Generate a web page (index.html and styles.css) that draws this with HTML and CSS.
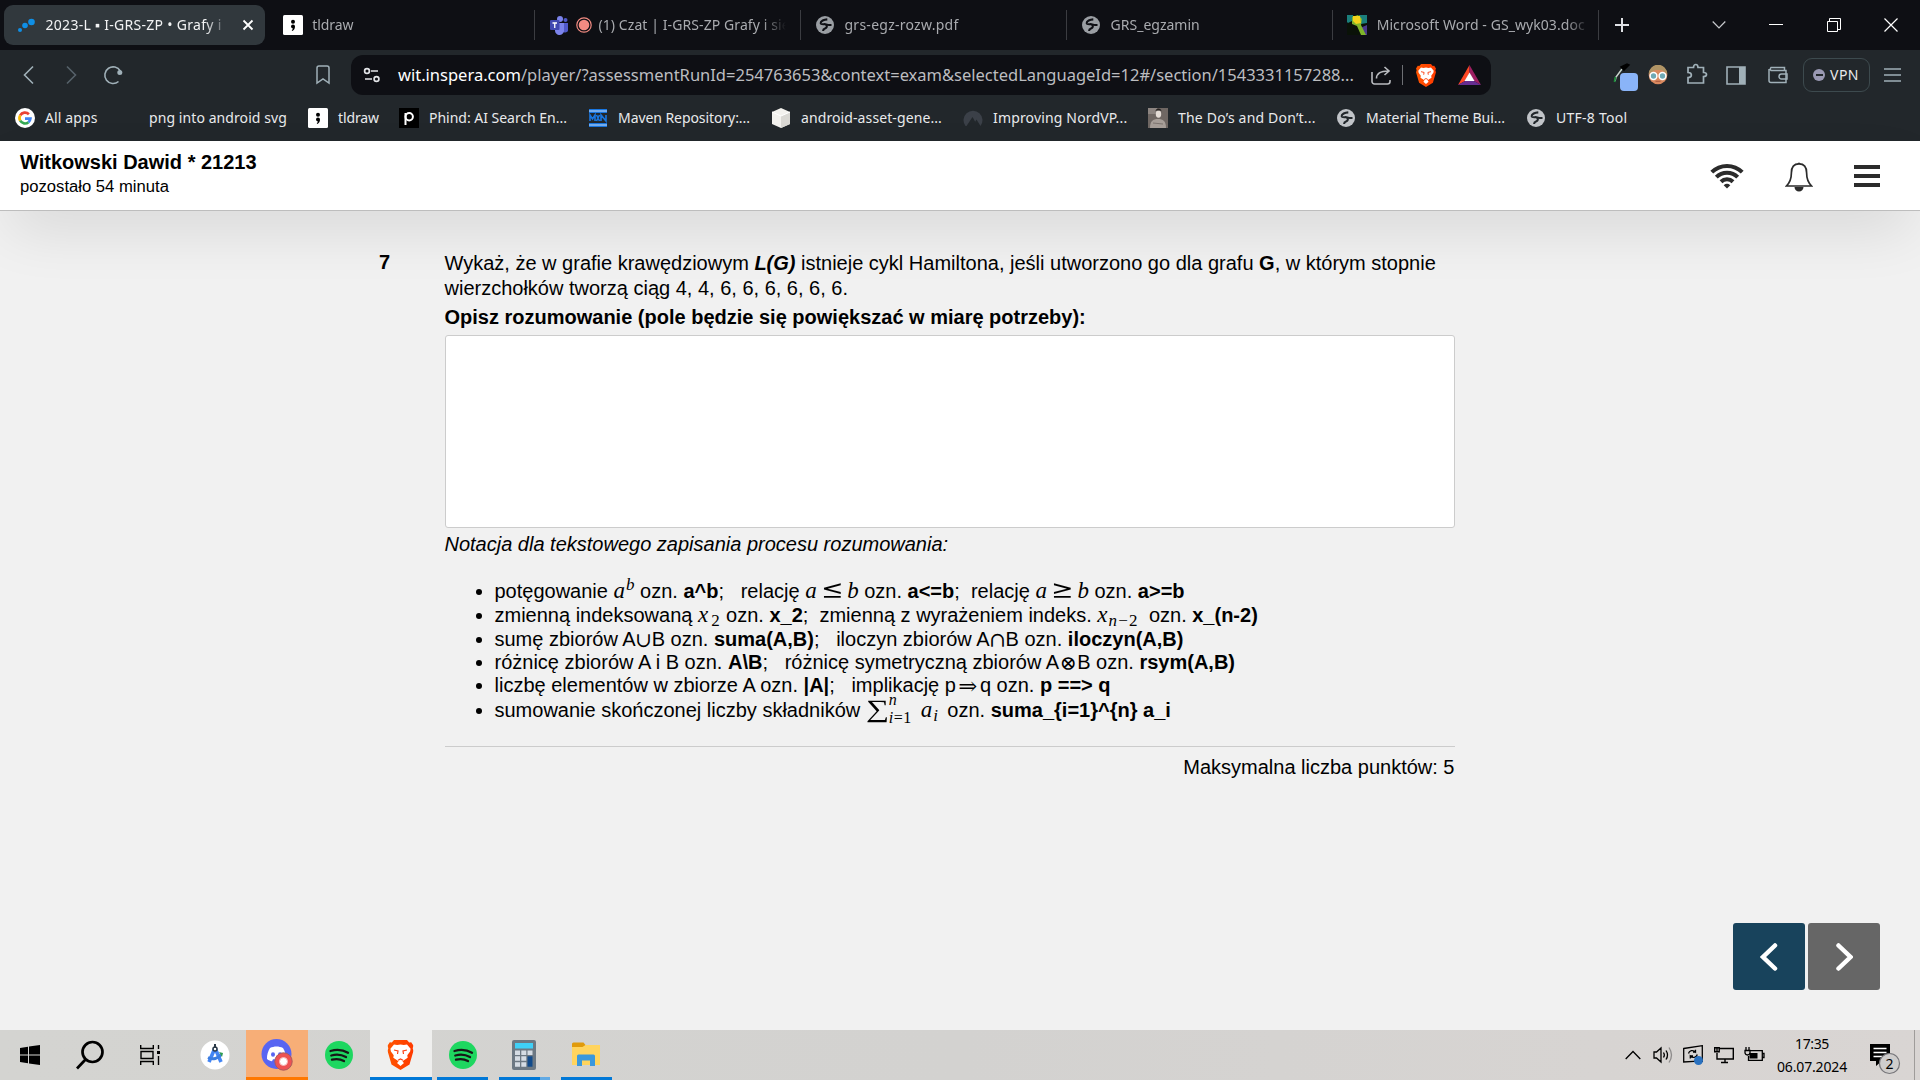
FILE: index.html
```html
<!DOCTYPE html>
<html lang="pl">
<head>
<meta charset="utf-8">
<title>2023-L ▪ I-GRS-ZP • Grafy i sieci</title>
<link rel="stylesheet" href="styles.css">
</head>
<body>
<svg class="defs" width="0" height="0">
  <symbol id="globe" viewBox="0 0 18 18"><circle cx="9" cy="9" r="9" fill="currentColor"/><path d="M11.300 3.400C8 3.600 4.500 5 4.700 7.200c.2 1.500 2.800.8 4.800 1 1.500.2 2 .8 3.300.8h2.700M9.800 8.500c1.800 1.700 1.200 3.300-.8 3.900-1.700.5-1.900 1.300-1.900 2.600" fill="none" stroke="var(--hole)" stroke-width="2.100"/></symbol>
  <symbol id="tld" viewBox="0 0 20 20"><rect width="20" height="20" rx="1.500" fill="#fff"/><circle cx="10" cy="6.700" r="2" fill="#000"/><path d="M8 11.500a2 2 0 1 1 4 0c0 2.300-1 3.700-2.700 4.500l-.6-.9c.8-.5 1.200-1.100 1.200-1.700-1.100 0-1.900-.9-1.900-1.900z" fill="#000"/></symbol>
  <symbol id="spot" viewBox="0 0 28 28"><circle cx="14" cy="14" r="14" fill="#1ed760"/><path d="M5.500 10c6-1.700 12.500-1.100 17.500 1.700M6.300 14.500c5-1.400 10.500-.8 14.700 1.600M7 18.700c4.200-1.100 8.500-.6 12 1.400" fill="none" stroke="#171717" stroke-width="2.300" stroke-linecap="round"/></symbol>
  <symbol id="lion" viewBox="0 0 26 30"><path d="M6.500 0h13l2.200 2.600 2-.4L26 5.800l-.8 2.400.8 2.600-4 13.700-9 5.500-9-5.500L0 10.800l.8-2.600L0 5.800l2.300-3.600 2 .4z" fill="url(#lg)"/><path d="M13 4.500l3.300.6 3.200-.5 3.600 4.200-.5 2.700-2.800 3.800.4 2.500-4.200 2.600-1 1.100 1.500 1.600L13 26l-3.500-2.900 1.500-1.600-1-1.100-4.200-2.600.4-2.500-2.800-3.800-.5-2.700 3.600-4.200 3.200.5z" fill="#fff"/><path d="M6.500 10l4 1-.5 3M19.500 10l-4 1 .5 3M10.500 20.300l2.500-1.400 2.500 1.400" fill="none" stroke="#fb4012" stroke-width="1.200"/></symbol>
  <linearGradient id="lg"><stop offset="0" stop-color="#ff5500"/><stop offset="1" stop-color="#ff3a00"/></linearGradient>
</svg>

<header class="browser">
  <div class="tabs">
    <div class="tab active">
      <svg class="fav" viewBox="0 0 20 20" fill="#0f8fe6"><circle cx="4" cy="15" r="2"/><circle cx="9" cy="10.500" r="2.800"/><circle cx="15.500" cy="7" r="3.300"/></svg>
      <span class="tab-title t-exam">2023-L ▪ I-GRS-ZP • Grafy i</span>
      <svg class="tab-close" viewBox="0 0 12 12"><path d="M1.500 1.500l9 9M10.500 1.500l-9 9" stroke="#fff" stroke-width="1.800"/></svg>
    </div>
    <div class="tab"><svg class="fav"><use href="#tld"/></svg><span class="tab-title">tldraw</span></div>
    <div class="tab sep">
      <svg class="fav" viewBox="0 0 20 20"><circle cx="11" cy="4" r="3" fill="#7b83eb"/><circle cx="16.500" cy="5" r="2" fill="#5059c9"/><path d="M13 8h6v6a3 3 0 0 1-6 1z" fill="#5059c9"/><path d="M6 8h9v7a4.500 4.500 0 0 1-9 1z" fill="#7b83eb"/><rect x="1" y="5" width="9.500" height="10" rx="1" fill="#4048b0"/><path d="M3.500 8h4.500M5.750 8v5" stroke="#fff" stroke-width="1.300"/></svg>
      <svg class="rec" viewBox="0 0 16 16"><circle cx="8" cy="8" r="7.200" fill="none" stroke="#f28b82" stroke-width="1.200"/><circle cx="8" cy="8" r="5.300" fill="#f28b82"/></svg>
      <span class="tab-title t-chat">(1) Czat | I-GRS-ZP Grafy i sie</span>
    </div>
    <div class="tab sep"><svg class="fav globe"><use href="#globe"/></svg><span class="tab-title t-pdf">grs-egz-rozw.pdf</span></div>
    <div class="tab sep"><svg class="fav globe"><use href="#globe"/></svg><span class="tab-title t-egz">GRS_egzamin</span></div>
    <div class="tab sep">
      <svg class="fav" viewBox="0 0 20 20"><rect width="20" height="20" fill="#0a1208"/><path d="M0 0h6l1 5-6 3-1-1zM12 0h8v8l-6 1z" fill="#1b7f7c"/><path d="M13 13l7-3v10h-5z" fill="#4b3a8c"/><path d="M5 2l6-2 4 4-1 6 5 10h-5l-4-9-5-2z" fill="#7fb52a"/><path d="M6 1l7 0 1 7-5 1-3-3z" fill="#f1d21b"/></svg>
      <span class="tab-title t-word">Microsoft Word - GS_wyk03.doc</span>
    </div>
    <div class="newtab sep"><svg width="14" height="14"><path d="M7 0v14M0 7h14" stroke="#dfe1e5" stroke-width="2"/></svg></div>
    <div class="winbtns">
      <svg width="14" height="14"><path d="M.7 3.500l6.300 6.500 6.300-6.500" fill="none" stroke="#c8cace" stroke-width="1.200"/></svg>
      <svg width="14" height="14"><path d="M0 6.500h14" stroke="#fff"/></svg>
      <svg width="14" height="14"><path d="M.5 3.500h10v10H.5zM2.500 3.500v-3h11v11h-3" fill="none" stroke="#fff"/></svg>
      <svg width="14" height="14"><path d="M.5.5l13 13M13.500.5l-13 13" stroke="#fff" stroke-width="1.200"/></svg>
    </div>
  </div>

  <div class="toolbar">
    <div class="nav">
      <svg width="20" height="20"><path d="M14 1.500L5.500 10l8.500 8.500" fill="none" stroke="#a0b0b8" stroke-width="1.600"/></svg>
      <svg width="20" height="20"><path d="M6 1.500l8.500 8.500L6 18.500" fill="none" stroke="#56616a" stroke-width="1.600"/></svg>
      <svg width="20" height="20"><path d="M15.500 16.500A8.300 8.300 0 1 1 17.300 6" fill="none" stroke="#a0b0b8" stroke-width="1.600"/><circle cx="16.800" cy="7.500" r="2.500" fill="#a0b0b8"/></svg>
    </div>
    <svg class="mark" width="14" height="20"><path d="M1 3a2 2 0 0 1 2-2h8a2 2 0 0 1 2 2v15l-6-4-6 4z" fill="none" stroke="#a0b0b8" stroke-width="1.500"/></svg>
    <div class="url">
      <svg class="tune" width="18" height="16" fill="none" stroke="#e3e5e8" stroke-width="1.700"><circle cx="4" cy="4" r="2.400"/><path d="M8 4h7M2 12h7"/><circle cx="13.500" cy="12" r="2.400"/></svg>
      <span class="address"><b>wit.inspera.com</b>/player/?assessmentRunId=254763653&amp;context=exam&amp;selectedLanguageId=12#/section/1543331157288...</span>
      <svg class="share" width="20" height="19" fill="none" stroke="#b9bbbf" stroke-width="1.600"><path d="M1 6v9.500a2.500 2.500 0 0 0 2.500 2.500h13a2.500 2.500 0 0 0 2.500-2.500V14M5.500 12.500c0-5 4-7.500 12-7.500M13.500 1l4.500 4-4.500 4"/></svg>
      <i class="bar"></i>
      <svg class="brave" width="20" height="23" viewBox="0 0 26 30"><use href="#lion"/></svg>
      <svg width="23" height="20" viewBox="0 0 23 20"><path d="M11.500 0L0 20l7-4 4.500-8z" fill="#ff4724"/><path d="M11.500 0L23 20l-7-4-4.500-8z" fill="#9e1f63"/><path d="M0 20h23l-7-4H7z" fill="#662d91"/><path d="M11.500 7.500l5 8.500h-10z" fill="#fff"/></svg>
    </div>
    <div class="exts">
      <svg class="dropper" width="26" height="30"><path d="M2 19l1-4L9 7" fill="none" stroke="#c8d4cc" stroke-width="1.500"/><path d="M1.500 20l1-5" stroke="#1f8f3e" stroke-width="1.800"/><path d="M8 5l3 3 5-5-2-1z" fill="#000" stroke="#000" stroke-width="1.500"/><rect x="7" y="11" width="18" height="18" rx="4" fill="#8ab4f8"/></svg>
      <svg class="face" width="20" height="20"><circle cx="10" cy="10" r="9.300" fill="#d9895f"/><path d="M.7 9A9.300 9.300 0 0 1 19.300 9L14 5H7z" fill="#b09465"/><circle cx="5.500" cy="11" r="3.400" fill="#6fa9b5" stroke="#fff" stroke-width="1.500"/><circle cx="14.500" cy="11" r="3.400" fill="#6fa9b5" stroke="#fff" stroke-width="1.500"/><path d="M7.500 16.300h5" stroke="#a8573c"/></svg>
      <svg class="puzzle" width="22" height="22" fill="none" stroke="#a0b0b8" stroke-width="1.700"><path d="M2 4.500h5.500c0-4 4.500-4 4.500 0h5.500v5c4 0 4 4 0 4v6.500H2v-5.500c4.500 0 4.500-5 0-5z"/></svg>
      <svg class="side" width="20" height="19"><path d="M1 1h18v17H1z" fill="none" stroke="#a0b0b8" stroke-width="1.600"/><path d="M13 1h6v17h-6z" fill="#a0b0b8"/></svg>
      <svg class="wallet" width="20" height="18" fill="none" stroke="#a0b0b8" stroke-width="1.500"><path d="M16.500 4V1.500H3a2 2 0 0 0 0 3h15v12H3a2 2 0 0 1-2-2V3"/><path d="M19 8h-5.500a2.500 2.500 0 0 0 0 5H19z"/></svg>
      <span class="vpn"><i></i>VPN</span>
      <svg class="burger" width="17" height="14"><path d="M0 1h17M0 7h17M0 13h17" stroke="#a0b0b8" stroke-width="1.400"/></svg>
    </div>
  </div>

  <nav class="bookmarks">
    <a><svg viewBox="0 0 20 20"><circle cx="10" cy="10" r="10" fill="#fff"/><g fill="none" stroke-width="2.700"><path d="M13.900 6.200A5.500 5.500 0 0 0 5.200 7.300" stroke="#ea4335"/><path d="M5.200 7.300a5.500 5.500 0 0 0 0 5.400" stroke="#fbbc05"/><path d="M5.200 12.700a5.500 5.500 0 0 0 8.300 1.500" stroke="#34a853"/><path d="M13.500 14.200a5.500 5.500 0 0 0 1.900-3.500H10" stroke="#4285f4"/></g></svg><span class="k1">All apps</span></a>
    <a><svg viewBox="0 0 20 20"></svg><span class="k2">png into android svg</span></a>
    <a><svg><use href="#tld"/></svg><span class="k3">tldraw</span></a>
    <a><svg viewBox="0 0 20 20"><rect width="20" height="20" fill="#000"/><path d="M6.500 17V5" stroke="#fff" stroke-width="2"/><circle cx="10.200" cy="8.700" r="3.700" fill="none" stroke="#fff" stroke-width="2"/></svg><span class="k4">Phind: AI Search En...</span></a>
    <a><svg viewBox="0 0 20 20"><path d="M1 1h18v4H1zM1 15h18v4H1z" fill="#1976e0"/><path d="M1 3h18M1 17h18" stroke="#cfe2fa"/><path d="M2 13V7l2.500 4L7 7v6M8.500 7l3 6M11.500 7l-3 6M13 13V7l5 6V7" fill="none" stroke="#1976e0" stroke-width="1.600"/></svg><span class="k5">Maven Repository:...</span></a>
    <a><svg viewBox="0 0 20 20"><path d="M10 0l9 4v12l-9 4-9-4V4z" fill="#f3f2ee"/><path d="M10 8l9-4v12l-9 4z" fill="#d9d8d3"/><path d="M1 4l9 4 9-4" fill="none" stroke="#fff"/></svg><span class="k6">android-asset-gene...</span></a>
    <a><svg viewBox="0 0 20 20"><path d="M2.500 18a9.500 9.500 0 1 1 15 0l-4-6.500-1.300 2.200L9.500 9 3.500 18z" fill="#3b4048"/></svg><span class="k7">Improving NordVP...</span></a>
    <a><svg viewBox="0 0 20 20"><rect width="20" height="20" fill="#6f6763"/><path d="M0 0h9v6H0z" fill="#8d8581"/><ellipse cx="10.500" cy="6" rx="2.700" ry="3.800" fill="#e4dcd6"/><path d="M7.500 3.500c0-4 6-4 6 0l-1-1h-4z" fill="#262220"/><path d="M2 20c0-7 3-9 8-9s8 2 8 9z" fill="#a79e98"/><path d="M5 15l10 1" stroke="#7d746f"/></svg><span class="k8">The Do’s and Don’t...</span></a>
    <a><svg class="globe lit"><use href="#globe"/></svg><span class="k9">Material Theme Bui...</span></a>
    <a><svg class="globe lit"><use href="#globe"/></svg><span class="k10">UTF-8 Tool</span></a>
  </nav>
</header>

<div class="exam-head">
  <div>
    <div class="student">Witkowski Dawid * 21213</div>
    <div class="left">pozostało 54 minuta</div>
  </div>
  <div class="exam-icons">
    <svg width="34" height="26" viewBox="0 0 34 26"><g fill="none" stroke="#2b2b2b" stroke-width="4"><path d="M1.800 9.200a21.500 21.500 0 0 1 30.400 0"/><path d="M6.300 14.200a15 15 0 0 1 21.400 0"/><path d="M11 18.800a8.600 8.600 0 0 1 12 0"/></g><path d="M13.700 22.200a5 5 0 0 1 6.600 0L17 25.500z" fill="#2b2b2b"/></svg>
    <svg width="28" height="31" viewBox="0 0 28 31"><path d="M14 2.800c-6 0-7.600 4.600-7.600 9 0 6.200-1.600 10-5 13.200h25.200c-3.400-3.200-5-7-5-13.200 0-4.400-1.600-9-7.600-9z" fill="none" stroke="#2b2b2b" stroke-width="1.700"/><path d="M12.500 3a1.500 1.500 0 1 1 3 0M9.500 26h9a4.500 4.500 0 0 1-9 0z" fill="#2b2b2b"/></svg>
    <svg width="27" height="22"><path d="M0 2h26M0 11h26M0 20h26" stroke="#2b2b2b" stroke-width="4"/></svg>
  </div>
</div>

<main>
  <div class="question">
    <b class="num">7</b>
    <div class="body">
      <p class="task">Wykaż, że w grafie krawędziowym <b><i>L(G)</i></b> istnieje cykl Hamiltona, jeśli utworzono go dla grafu <b>G</b>, w którym stopnie wierzchołków tworzą ciąg 4, 4, 6, 6, 6, 6, 6, 6.</p>
      <p class="label">Opisz rozumowanie (pole będzie się powiększać w miarę potrzeby):</p>
      <div class="answer"></div>
      <p class="note">Notacja dla tekstowego zapisania procesu rozumowania:</p>
      <ul>
        <li>potęgowanie <span class="m pow">a<sup>b</sup></span> ozn. <b>a^b</b>; &nbsp; relację <span class="m rel"><span>a</span><u>≤</u><span>b</span></span> ozn. <b>a&lt;=b</b>; &nbsp;relację <span class="m rel"><span>a</span><u>≥</u><span>b</span></span> ozn. <b>a&gt;=b</b></li>
        <li>zmienną indeksowaną <span class="m x2">x<sub class="up">2</sub></span> ozn. <b>x_2</b>; &nbsp;zmienną z wyrażeniem indeks. <span class="m xn">x<sub>n<u>−2</u></sub></span> ozn. <b>x_(n-2)</b></li>
        <li>sumę zbiorów A<span class="s cup">∪</span>B ozn. <b>suma(A,B)</b>; &nbsp; iloczyn zbiorów A<span class="s cup">∩</span>B ozn. <b>iloczyn(A,B)</b></li>
        <li>różnicę zbiorów A i B ozn. <b>A\B</b>; &nbsp; różnicę symetryczną zbiorów A<span class="s ox">⊗</span>B ozn. <b>rsym(A,B)</b></li>
        <li>liczbę elementów w zbiorze A ozn. <b>|A|</b>; &nbsp; implikację p<span class="s imp">⇒</span>q ozn. <b>p ==&gt; q</b></li>
        <li>sumowanie skończonej liczby składników <span class="m sum"><u class="sig">∑</u><span class="lim"><span>n</span><span>i<u>=1</u></span></span>a<sub>i</sub></span> ozn. <b>suma_{i=1}^{n} a_i</b></li>
      </ul>
      <p class="points">Maksymalna liczba punktów: 5</p>
    </div>
  </div>
  <div class="pager">
    <span class="prev"><svg width="18" height="28"><path d="M15 2.500L3 14l12 11.500" fill="none" stroke="#fff" stroke-width="4.500" stroke-linecap="round"/></svg></span>
    <span class="next"><svg width="18" height="28"><path d="M3.500 2.500l12 11.500-12 11.500" fill="none" stroke="#fff" stroke-width="4.500" stroke-linecap="round"/></svg></span>
  </div>
</main>

<footer class="taskbar">
  <div class="apps">
    <span class="sys"><svg width="20" height="20"><path d="M0 3l8-1.200V9.500H0zM9 1.600L20 0v9.500H9zM0 10.500h8v7.700L0 17zM9 10.500h11V20L9 18.400z"/></svg></span>
    <span class="sys"><svg width="30" height="30" fill="none" stroke="#000" stroke-width="2.700"><circle cx="17.500" cy="12" r="10"/><path d="M10.500 19.500L2 28.500"/></svg></span>
    <span class="sys"><svg width="22" height="20" fill="none" stroke="#000" stroke-width="1.400"><path d="M2 6.500h12v7H2zM1.700 0v3.500h12.600V0M1.700 20v-3.500h12.600V20M19.500 0v4M19.500 11v9"/><path d="M18 7.500h3" stroke-width="3"/></svg></span>
    <span class="app first"><svg width="30" height="30"><circle cx="15" cy="15" r="14.500" fill="#fff"/><path d="M15 8L9 22M15 8l6 14" stroke="#4285f4" stroke-width="3.600"/><path d="M8 17.500c5 2.500 10 1 13-3" fill="none" stroke="#3b7de0" stroke-width="3"/><path d="M19 12l4 1-1 4z" fill="#2e9b53"/><circle cx="15" cy="9" r="2" fill="#fff" stroke="#2b3a48" stroke-width="1.500"/><path d="M15 4v4" stroke="#2b3a48" stroke-width="2"/></svg></span>
    <span class="app discord"><svg width="32" height="32"><circle cx="15.500" cy="15" r="15" fill="#5865f2"/><path d="M9 9c4-2 9-2 13 0 2 3 3.200 7 3 11-2 1.500-3 2-5 2.300l-1-2h-7l-1 2c-2-.3-3-.8-5-2.300-.2-4 1-8 3-11z" fill="#fff"/><ellipse cx="12" cy="15.500" rx="2" ry="2.300" fill="#5865f2"/><ellipse cx="19" cy="15.500" rx="2" ry="2.300" fill="#5865f2"/><circle cx="22.500" cy="22.500" r="8.700" fill="#ee5253" stroke="#a85a5c"/><circle cx="22.500" cy="22.500" r="4" fill="#fff" stroke="#f7b4b4"/></svg></span>
    <span class="app"><svg width="28" height="28"><use href="#spot"/></svg></span>
    <span class="app current"><svg width="27" height="30" viewBox="0 0 26 30"><use href="#lion"/></svg></span>
    <span class="app open"><svg width="28" height="28"><use href="#spot"/></svg></span>
    <span class="app open split"><svg width="24" height="30"><rect width="24" height="30" rx="2" fill="#6c7883"/><rect x="3" y="3" width="18" height="5.500" fill="#3fd0f7"/><path d="M3 10.500h5v4.500H3zM9.300 10.500h5v4.500h-5zM15.500 10.500h5v4.500h-5zM3 16.300h5v4.500H3zM9.300 16.300h5v4.500h-5zM3 22.200h5v4.500H3zM9.300 22.200h5v4.500h-5z" fill="#d5dce4"/><path d="M15.500 16.300h5v10.400h-5z" fill="#114a8b"/></svg></span>
    <span class="app open"><svg width="28" height="26"><path d="M0 2a1.500 1.500 0 0 1 1.500-1.500h10l2 2.500v6H0z" fill="#e09a0b"/><path d="M0 5h10.500l3-2H28v20H0z" fill="#ffd45e"/><path d="M5 24V14a1.500 1.500 0 0 1 1.500-1.500h15A1.500 1.500 0 0 1 23 14v10h-5v-5.500h-8V24z" fill="#3a98dc"/></svg></span>
  </div>
  <div class="tray">
    <svg width="16" height="10"><path d="M.7 9L8 1.500 15.300 9" fill="none" stroke="#000" stroke-width="1.300"/></svg>
    <svg width="20" height="18" fill="none" stroke="#000" stroke-width="1.300"><path d="M1 6h2.500L8 2v14l-4.500-4H1zM10.500 6.500q1.700 2.500 0 5M13 4.500q3 4.500 0 9"/><path d="M16 1.500q5 7.500 0 15" stroke="#8d8b8b"/></svg>
    <svg width="21" height="20" fill="none" stroke="#000" stroke-width="1.300"><path d="M.7 3.500l18.600-2.800v15.600H11L.7 17zM5.500 8.500c.7-3 4.500-4 7-1.500V4.800M12.500 7.200h-2.500M14.300 9.500c-.7 3-4.500 4-7 1.500v2.500M7.500 11h2.500"/><circle cx="15.500" cy="15.500" r="4.500" fill="#2a71bf" stroke="none"/></svg>
    <svg width="20" height="17" fill="none" stroke="#000" stroke-width="1.400"><path d="M5 1.500h14.300v10.500H3V6M11 12v3.500M7 15.500h7M.7.700h4.500v4H.7zM3 1v3"/></svg>
    <svg width="21" height="16" fill="none" stroke="#000" stroke-width="1.300"><path d="M6 3.700h12.300v9.600H4.500V9M18.500 6.500h1.500v4h-1.500M1 3.500h5v2.500q-.5 2-2.500 2T1 6zM2 0v3M5 0v3"/><path d="M5.500 6h8v5.500h-8z" fill="#000" stroke="none"/></svg>
    <div class="clock"><span class="hour">17:35</span><span class="date">06.07.2024</span></div>
    <svg class="notif" width="31" height="31"><path d="M0 0h20v17h-8l-6 5v-5H0z"/><path d="M3.500 4.500h13M3.500 8.500h13M3.500 12.500h9" stroke="#fff" stroke-width="1.300"/><circle cx="19.500" cy="19.500" r="10" fill="#cfcdcc" stroke="#77767a" stroke-width="1.200"/><text x="19.500" y="24.500" text-anchor="middle">2</text></svg>
    <i class="peek"></i>
  </div>
</footer>
</body>
</html>
```
FILE: styles.css
```css
* { box-sizing: border-box; }

body {
  margin: 0;
  width: 1920px;
  height: 1080px;
  overflow: hidden;
  display: flex;
  flex-direction: column;
  background: #f1f1f1;
  color: #000;
  font: 20px/25px "Liberation Sans", Arial, sans-serif;
}

svg { display: block; flex: none; }
.defs { position: absolute; }
p, ul { margin: 0; }

/* Browser chrome */
.browser {
  height: 141px;
  background: #22272b;
  color: #e9eaec;
  font: 14px/20px "Noto Sans", "Open Sans", sans-serif;
}

.tabs {
  display: flex;
  height: 50px;
  padding-left: 2px;
  background: #0e0f14;
}

.tab {
  display: flex;
  flex: none;
  align-items: center;
  width: 266.100px;
  height: 40px;
  margin-top: 5px;
  padding: 0 14px 0 15px;
  color: #a9abaf;
}

.tab.active {
  width: 261px;
  margin: 5px 2.800px 0 2px;
  padding-left: 12px;
  border-radius: 9px;
  background: #31383d;
  color: #f2f3f4;
}

.sep { background: linear-gradient(#3b3c41, #3b3c41) 0 5px / 1px 30px no-repeat; }
.fav { width: 20px; height: 20px; margin-right: 9.500px; }
.globe { width: 18px; height: 18px; margin: 0 10.500px 0 1px; color: #9a9ea3; --hole: #0e0f14; }
.rec { width: 16px; height: 16px; margin: 0 6.500px 0 -2.500px; }

.tab-title {
  flex: 1;
  overflow: hidden;
  white-space: nowrap;
  letter-spacing: -0.1px;
  mask-image: linear-gradient(90deg, #000 calc(100% - 24px), transparent);
}

.t-exam { flex: 0 0 183px; letter-spacing: 0.29px; }
.t-chat { flex: 0 0 188px; letter-spacing: 0.09px; }
.t-pdf { letter-spacing: 0.26px; }
.t-egz { letter-spacing: 0; }
.t-word { letter-spacing: 0.07px; flex: 0 0 213px; }
.tab-close { width: 12px; height: 12px; margin-left: 13px; }

.newtab {
  width: 48px;
  height: 40px;
  margin-top: 5px;
  padding: 13px 0 0 17px;
}

.winbtns {
  display: flex;
  align-items: center;
  gap: 43.300px;
  margin-left: auto;
  padding-right: 22px;
}

.toolbar { display: flex; align-items: center; height: 50px; }
.nav { display: flex; gap: 22px; padding-left: 19px; }
.mark { margin-left: 192.500px; }

.url {
  display: flex;
  align-items: center;
  width: 1140px;
  height: 40px;
  margin-left: 21.500px;
  padding-left: 12px;
  border-radius: 12px;
  background: #0e0f14;
}

.address {
  width: 973px;
  margin-left: 17px;
  color: #bcbdc0;
  font-size: 16.500px;
  white-space: nowrap;
}

.address b { color: #fff; font-weight: normal; }
.bar { width: 1px; height: 20px; margin: 0 13px 0 11px; background: #6d6f74; }
.brave { margin-right: 22px; }

.exts { display: flex; align-items: center; margin-left: auto; padding-right: 19px; }
.dropper { margin: 4px 9px 0 0; }
.face { margin-right: 18px; }
.puzzle { margin: -3px 18px 0 0; }
.side { margin-right: 22px; }
.wallet { margin-right: 15px; }

.vpn {
  display: flex;
  align-items: center;
  gap: 5px;
  width: 67px;
  height: 34px;
  margin-right: 14px;
  padding-left: 9px;
  border: 1px solid #3d4a4e;
  border-radius: 9px;
  letter-spacing: 0.49px;
}

.vpn i {
  width: 12px;
  height: 12px;
  border-radius: 50%;
  background: linear-gradient(#22272b, #22272b) center / 7px 2px no-repeat #9a99b3;
}

.bookmarks { display: flex; gap: 21px; padding: 8px 0 0 15px; }
.bookmarks a { display: flex; gap: 10px; white-space: nowrap; }
.bookmarks svg { width: 20px; height: 20px; }
.bookmarks .globe { width: 18px; height: 18px; margin: 1px; color: #c1c4c8; --hole: #22272b; }
.k1 { width: 53px; letter-spacing: 0.13px; }
.k2 { width: 138px; letter-spacing: 0.08px; }
.k3 { width: 40px; letter-spacing: -0.11px; }
.k4 { width: 138px; letter-spacing: -0.02px; }
.k5 { width: 132px; letter-spacing: -0.07px; }
.k6 { width: 141px; letter-spacing: 0.1px; }
.k7 { width: 134px; letter-spacing: 0.16px; }
.k8 { width: 137px; letter-spacing: 0.19px; }
.k9 { width: 139px; letter-spacing: -0.03px; }
.k10 { letter-spacing: 0.25px; }

/* Exam player header */
.exam-head {
  position: relative;
  display: flex;
  justify-content: space-between;
  height: 70px;
  padding: 9px 39px 0 20px;
  border-bottom: 1px solid #bdbdbd;
  background: #fff;
  box-shadow: 0 25px 60px -10px rgba(0, 0, 0, 0.12);
}

.student { font-weight: bold; line-height: 24px; }
.left { font-size: 16.650px; }
.exam-icons { display: flex; align-items: center; gap: 41px; height: 52px; }

/* Question */
main {
  flex: 1;
  display: flex;
  flex-direction: column;
  justify-content: space-between;
}

.question { display: flex; padding: 40px 0 0 379px; }
.num { width: 65.500px; line-height: 22px; }
.body { width: 1010px; }
.label { margin-top: 4px; font-weight: bold; }

.answer {
  height: 193px;
  margin-top: 5px;
  border: 1px solid #ccc;
  border-radius: 3px;
  background: #fff;
}

.note { margin-top: 4px; font-style: italic; }
ul { margin-top: 22px; padding: 0 0 22px 50px; border-bottom: 1px solid #ccc; }
li { height: 24px; line-height: 24px; white-space: nowrap; }
li:nth-child(n+4) { height: 23px; line-height: 23px; }
li:nth-child(6) { height: 27px; line-height: 27px; }
.points { margin-top: 8px; text-align: right; }

/* Formulas */
.m {
  display: inline-block;
  font: italic 23px/20px "Liberation Serif", "Times New Roman", serif;
  white-space: nowrap;
}

.m u { font-style: normal; text-decoration: none; }
.m sup, .m sub { font-size: 17px; line-height: 0; }
.m sup { margin-left: 1px; vertical-align: 8px; }
.m sub { margin-left: 1px; vertical-align: -4px; }
.m .up { margin-left: 3px; font-style: normal; }
.pow { width: 21px; }
.rel { display: inline-flex; justify-content: space-between; width: 53.500px; }
.rel u { font-family: "DejaVu Math TeX Gyre", "Liberation Serif", serif; transform: scaleX(1.150); }
.x2 { width: 22.500px; }
.xn { width: 46px; }
.xn sub { letter-spacing: 1.200px; }
.sum { width: 76px; height: 20px; }
.sig {
  display: inline-block;
  width: 23px;
  font-size: 25px;
  line-height: 20px;
  transform: scaleX(1.300);
  transform-origin: left;
}

.lim {
  display: inline-flex;
  flex-direction: column;
  width: 32px;
  margin: -14px 0;
  font-size: 16px;
  line-height: 18px;
  letter-spacing: 0.5px;
  vertical-align: 12px;
}

.s {
  display: inline-block;
  font: 20px/20px "DejaVu Math TeX Gyre", "Liberation Serif", serif;
  text-align: center;
}

.cup { width: 16px; }
.ox { width: 18px; }
.imp { width: 24px; }

.pager { display: flex; justify-content: flex-end; gap: 3px; padding: 0 40px 40px 0; }

.pager span {
  display: flex;
  align-items: center;
  justify-content: center;
  width: 72px;
  height: 67px;
  border-radius: 3px;
  background: #666;
}

.pager .prev { background: #18435c; }

/* Taskbar */
.taskbar {
  display: flex;
  justify-content: space-between;
  height: 50px;
  background: linear-gradient(90deg, #d4d4d1, #d3d2d0 50%, #d9d5d3);
  font: 14px/20px "Noto Sans", "Open Sans", sans-serif;
}

.apps { display: flex; }
.apps span { display: flex; align-items: center; justify-content: center; width: 60px; }
.apps .app { width: 61.900px; }
.apps .first { margin-left: 4px; }
.apps .discord { border-bottom: 3px solid #ff7800; padding-top: 3px; background: #f7ae77; }
.apps .current { border-bottom: 3px solid #0078d7; padding-top: 3px; background: #efefee; }
.open { background: linear-gradient(#0078d7, #0078d7) 50% 100% / 51px 3px no-repeat; }

.open.split {
  background: linear-gradient(90deg, #0078d7 41px, #62aae4 41px) 50% 100% / 51px 3px no-repeat;
}

.tray { display: flex; align-items: center; gap: 10px; }
.tray > svg:first-child { margin-right: 2px; }
.clock { display: flex; flex-direction: column; align-items: center; width: 70px; margin-left: 2px; line-height: 23px; }
.hour { letter-spacing: -0.36px; }
.date { letter-spacing: -0.16px; }
.notif { margin: 9px 0 0 13px; font-size: 14px; }
.peek { width: 1px; height: 50px; margin-right: 5px; margin-left: 3px; background: #9f9c9a; }
```
